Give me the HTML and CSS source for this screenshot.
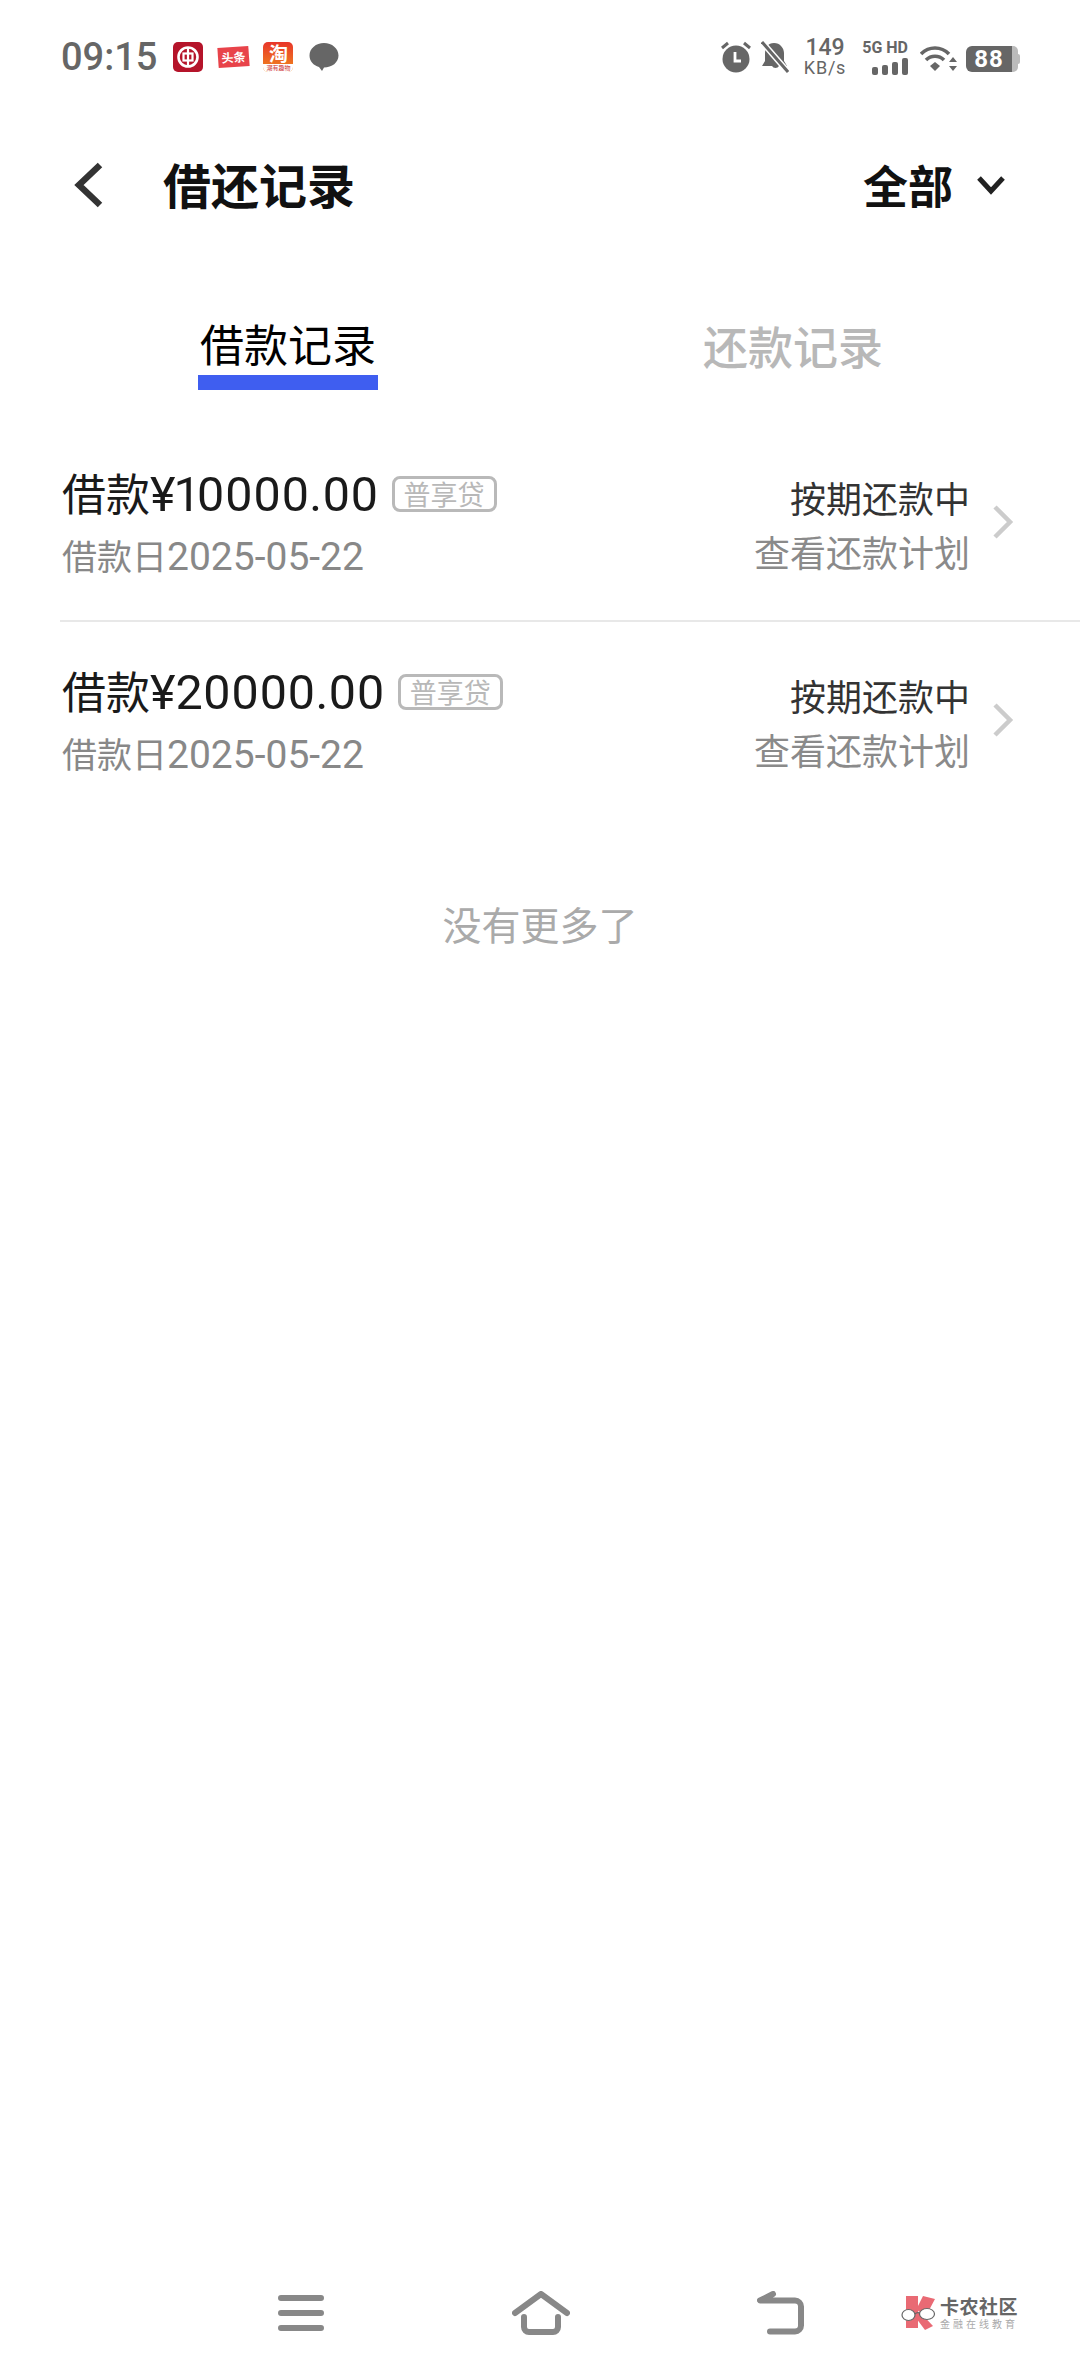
FILE: index.html
```html
<!DOCTYPE html>
<html lang="zh-CN">
<head>
<meta charset="utf-8">
<title>借还记录</title>
<link rel="stylesheet" href="styles.css">
</head>
<body>
<div class="page">
  <div class="status">
    <div class="status-left">
      <span class="time">09:15</span>
      <svg class="ic30" viewBox="0 0 30 30"><rect width="30" height="30" rx="5" fill="#b5142a"/><circle cx="15" cy="15" r="9.5" fill="none" stroke="#fff" stroke-width="2.6"/><rect x="10.5" y="11.5" width="9" height="7" fill="none" stroke="#fff" stroke-width="2.2"/><path d="M15 5v20" stroke="#fff" stroke-width="2.2"/></svg>
      <span class="toutiao">头条</span>
      <span class="taobao"><b>淘</b><i>潮有趣物</i></span>
      <svg class="ic30" viewBox="0 0 30 30"><path d="M15 1C7 1 .5 6.500.5 13.500c0 5.500 4 10 9.500 11.500l3 4 2-3.500C23 25.500 29.500 20.500 29.500 13.500 29.500 6.500 23 1 15 1z" fill="#666"/></svg>
    </div>
    <div class="status-right">
      <svg class="alarm" viewBox="0 0 30 32"><circle cx="15" cy="18" r="13.500" fill="#666"/><path d="M1 7l6-5M29 7l-6-5" stroke="#666" stroke-width="3"/><path d="M14 11v9h6" fill="none" stroke="#fff" stroke-width="2.800"/></svg>
      <svg class="bell" viewBox="0 0 28 32"><path d="M13 2c-6 0-9 5-9 10v8l-3 5h10a4 4 0 0 0 7 0h8l-3-5v-8c0-5-4-10-10-10z" fill="#666"/><path d="M1 1l26 30" stroke="#fff" stroke-width="6"/><path d="M1 1l26 30" stroke="#666" stroke-width="3"/></svg>
      <div class="speed"><span>149</span><span class="unit">KB/s</span></div>
      <div class="net">
        <span class="net-label">5G HD</span>
        <svg class="bars" viewBox="0 0 36 17"><g fill="#666"><rect x="0" y="9" width="6" height="8" rx="2"/><rect x="10" y="7" width="6" height="10" rx="2"/><rect x="20" y="4" width="6" height="13" rx="2"/><rect x="30" y="0" width="6" height="17" rx="2"/></g></svg>
      </div>
      <svg class="wifi" viewBox="0 0 38 27"><g fill="none" stroke="#666" stroke-width="3.600"><path d="M1 9c8-8 20-8 28 0"/><path d="M6 15c5-5 13-5 18 0"/></g><path d="M10 21l5-4 5 4-5 5z" fill="#666"/><path d="M33 12l4 5h-8zM33 26l4-5h-8z" fill="#666"/></svg>
      <div class="battery"><span class="batt-body">88</span><span class="batt-rest"></span><span class="batt-tip"></span></div>
    </div>
  </div>

  <header class="topbar">
    <div class="top-left">
      <svg class="back" viewBox="0 0 32 46"><path d="M27 3L6 23l21 20" fill="none" stroke="#333" stroke-width="6.500"/></svg>
      <h1 class="title">借还记录</h1>
    </div>
    <div class="filter">
      <span>全部</span>
      <svg class="caret" viewBox="0 0 28 20"><path d="M2 3l12 13L26 3" fill="none" stroke="#222" stroke-width="5"/></svg>
    </div>
  </header>

  <nav class="tabs">
    <div class="tab active">借款记录</div>
    <div class="tab muted">还款记录</div>
  </nav>

  <section class="list">
    <article class="row">
      <div class="row-main">
        <div class="row-title"><span class="amount">借款<span class="num">¥10000.00</span></span><span class="tag">普享贷</span></div>
        <div class="row-date">借款日<span class="num">2025-05-22</span></div>
      </div>
      <div class="row-side">
        <div class="state">按期还款中</div>
        <div class="plan">查看还款计划</div>
      </div>
      <svg class="more" viewBox="0 0 22 36"><path d="M3 3l15 15L3 33" fill="none" stroke="#ccc" stroke-width="4.500"/></svg>
    </article>
    <article class="row">
      <div class="row-main">
        <div class="row-title"><span class="amount">借款<span class="num">¥20000.00</span></span><span class="tag">普享贷</span></div>
        <div class="row-date">借款日<span class="num">2025-05-22</span></div>
      </div>
      <div class="row-side">
        <div class="state">按期还款中</div>
        <div class="plan">查看还款计划</div>
      </div>
      <svg class="more" viewBox="0 0 22 36"><path d="M3 3l15 15L3 33" fill="none" stroke="#ccc" stroke-width="4.500"/></svg>
    </article>
  </section>

  <p class="end">没有更多了</p>

  <footer class="navbar">
    <svg class="nav-menu" viewBox="0 0 46 36"><path d="M3 3h40M3 18h40M3 33h40" stroke="#888" stroke-width="6" stroke-linecap="round"/></svg>
    <svg class="nav-home" viewBox="0 0 58 44"><path d="M3 22L29 3l26 19" fill="none" stroke="#888" stroke-width="6" stroke-linecap="round" stroke-linejoin="round"/><path d="M12 26v10a5 5 0 0 0 5 5h24a5 5 0 0 0 5-5V26" fill="none" stroke="#888" stroke-width="6" stroke-linecap="round"/></svg>
    <svg class="nav-back" viewBox="0 0 50 44"><path d="M16 3L3 9.500h35a6 6 0 0 1 6 6v19a6 6 0 0 1-6 6H13" fill="none" stroke="#888" stroke-width="6" stroke-linecap="round" stroke-linejoin="round"/></svg>
    <div class="brand">
      <svg class="brand-mark" viewBox="0 0 36 34"><g fill="#e96a74"><path d="M5 0h12v32H5z"/><path d="M22 0l12 3-8 15-11-4z"/><path d="M18 15l14 15-8 4-9-12z"/></g><ellipse cx="7.500" cy="19" rx="6.500" ry="5.500" fill="#fff" stroke="#666" stroke-width="1.200"/><ellipse cx="26" cy="18" rx="7.500" ry="5.500" fill="#fff" stroke="#666" stroke-width="1.200"/><path d="M14 18q2-2 4.500-1" fill="none" stroke="#666" stroke-width="1.200"/></svg>
      <div class="brand-text"><span class="brand-name">卡农社区</span><span class="brand-sub">金融在线教育</span></div>
    </div>
  </footer>
</div>
</body>
</html>
```

FILE: styles.css
```css
* { box-sizing: border-box; }
html, body { margin: 0; padding: 0; background: #fff; }
body { font-family: "Noto Sans CJK SC", "Noto Sans", sans-serif; }
.page { width: 1080px; height: 2376px; display: flex; flex-direction: column; overflow: hidden; }

.status { height: 114px; padding: 0 60px 0 61px; display: flex; justify-content: space-between; align-items: center; color: #666; }
.status-left, .status-right { display: flex; align-items: center; }
.time { font: 500 38px/1 Roboto, sans-serif; color: #666; margin-right: 16px; }
.ic30 { width: 30px; height: 30px; flex: none; }
.toutiao { width: 31px; height: 20px; margin: 0 14px 0 15px; background: #e8434a; color: #fff; font-size: 12px; line-height: 20px; text-align: center; font-weight: 700; transform: rotate(-4deg); white-space: nowrap; }
.taobao { width: 30px; height: 30px; margin-right: 16px; border-radius: 5px; background: linear-gradient(#e8362a, #f08a1e); display: flex; flex-direction: column; align-items: center; color: #fff; }
.taobao b { font-size: 19px; line-height: 22px; height: 22px; font-weight: 700; }
.taobao i { font-style: normal; font-size: 6px; line-height: 8px; height: 8px; background: #fff; color: #c33; width: 100%; text-align: center; white-space: nowrap; border-radius: 0 0 5px 5px; }
.alarm { width: 30px; height: 32px; margin-right: 10px; }
.bell { width: 28px; height: 32px; margin-right: 13px; }
.speed { width: 46px; display: flex; flex-direction: column; align-items: center; font: 500 23px/20px Roboto, sans-serif; margin: 2px 11px 0 0; }
.speed .unit { font-size: 18px; font-weight: 400; letter-spacing: .8px; }
.net { width: 49px; display: flex; flex-direction: column; align-items: flex-end; margin-right: 12px; }
.net-label { font: 700 16px/15px Roboto, sans-serif; white-space: nowrap; }
.bars { width: 36px; height: 17px; margin-top: 3px; }
.wifi { width: 38px; height: 27px; margin: 2px 8px 0 0; }
.battery { display: flex; align-items: center; margin-top: 4px; }
.batt-body { width: 46px; height: 26px; background: #666; color: #fff; border-radius: 6px 0 0 6px; font: 700 24px/26px Roboto, sans-serif; text-align: center; letter-spacing: 1px; }
.batt-rest { width: 6px; height: 26px; background: #bbb; border-radius: 0 5px 5px 0; }
.batt-tip { width: 2px; height: 10px; background: #bbb; border-radius: 0 2px 2px 0; }

.topbar { height: 146px; padding: 0 75px 6px 73px; display: flex; justify-content: space-between; align-items: center; }
.top-left { display: flex; align-items: center; }
.back { width: 32px; height: 46px; margin: 2px 58px 0 0; }
.title { margin: 0; font-size: 48px; line-height: 1.2; font-weight: 700; color: #111; }
.filter { display: flex; align-items: center; gap: 24px; margin-top: 2px; font-size: 45px; line-height: 1.2; font-weight: 700; color: #111; }
.caret { width: 28px; height: 20px; }

.tabs { display: flex; height: 164px; padding: 53px 0 0 198px; align-items: flex-start; }
.tab { font-size: 45px; line-height: 62px; }
.tab.active { width: 180px; color: #000; text-align: center; font-size: 44px; line-height: 60px; padding-bottom: 2px; border-bottom: 15px solid #3f5ef0; margin-right: 325px; white-space: nowrap; }
.tab.muted { color: #b8b8b8; font-weight: 500; margin-top: 2px; }

.list { display: flex; flex-direction: column; padding-left: 60px; }
.row { height: 198px; padding: 0 66px 0 2px; display: flex; align-items: center; border-bottom: 2px solid #e8e8e8; }
.row:last-child { border-bottom-color: transparent; }
.row-main { flex: 1; display: flex; flex-direction: column; gap: 5px; }
.row-title { display: flex; align-items: center; gap: 13px; height: 62px; }
.amount { font-size: 44px; line-height: 62px; color: #1a1a1a; white-space: nowrap; }
.amount .num { font-family: Roboto, sans-serif; font-size: 48.5px; font-variant-numeric: proportional-nums; }
.tag { width: 105px; height: 36px; border: 3px solid #b9b9b9; border-radius: 8px; font-size: 27px; line-height: 29px; color: #b8b8b8; text-align: center; }
.row-date { font-size: 35px; line-height: 50px; color: #888; white-space: nowrap; }
.row-date .num { font-family: Roboto, sans-serif; font-size: 39px; }
.row-side { display: flex; flex-direction: column; align-items: flex-end; gap: 4px; margin-top: 4px; }
.state { font-size: 36px; line-height: 50px; color: #333; }
.plan { font-size: 36px; line-height: 50px; color: #8a8a8a; }
.more { width: 22px; height: 36px; margin-left: 22px; }

.end { margin: 76px 0 0; text-align: center; font-size: 39px; line-height: 54px; color: #aaa; }

.navbar { margin-top: auto; height: 120px; padding: 0 60px 6px 278px; display: flex; align-items: center; }
.nav-menu { width: 46px; height: 36px; margin-right: 188px; }
.nav-home { width: 58px; height: 44px; margin-right: 187px; }
.nav-back { width: 50px; height: 44px; margin-right: 94px; }
.brand { display: flex; align-items: center; gap: 3px; }
.brand-mark { width: 36px; height: 34px; }
.brand-text { display: flex; flex-direction: column; color: #666; }
.brand-name { font-size: 19px; line-height: 22px; font-weight: 700; letter-spacing: .5px; white-space: nowrap; }
.brand-sub { font-size: 10px; line-height: 14px; letter-spacing: 3px; color: #aaa; white-space: nowrap; }
```
